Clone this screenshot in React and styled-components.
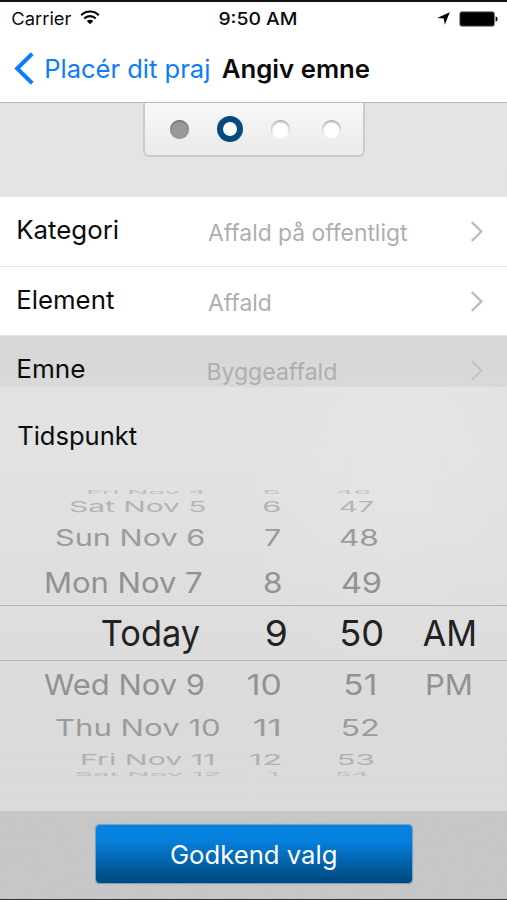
import { useLayoutEffect, useState } from 'react';
import styled, { createGlobalStyle } from 'styled-components';

const steps = ['done', 'current', 'next', 'next'];

const fields = [
  { label: 'Kategori', labelWidth: 100, value: 'Affald på offentligt', valueWidth: 199.5, height: 69 },
  { label: 'Element', labelWidth: 96.3, value: 'Affald', valueWidth: 62.5, height: 68 },
  { label: 'Emne', labelWidth: 66.7, value: 'Byggeaffald', valueWidth: 128, height: 51, selected: true },
];

// cells are [text, offset from the left, width]
const wheelRows = [
  { height: 5, squash: 0.16, color: '#bdbdbd', padding: '0 0 2px', cells: [['Fri Nov 4', 88, 117], ['5', 263, 17], ['46', 336, 34]] },
  { height: 22, squash: 0.5, color: '#b4b4b4', cells: [['Sat Nov 5', 69.5, 135.5], ['6', 263, 17], ['47', 339.5, 33.5]] },
  { height: 41, squash: 0.77, color: '#9b9b9b', cells: [['Sun Nov 6', 56, 148], ['7', 264.5, 15.5], ['48', 340, 37.5]] },
  { height: 47, squash: 0.97, color: '#929292', cells: [['Mon Nov 7', 45.5, 156], ['8', 263.5, 17], ['49', 341.5, 38.5]] },
  { height: 56, squash: 1, active: true, color: '#222', padding: '2px 0 0', cells: [['Today', 102, 98], ['9', 265.5, 20], ['50', 341, 41.5], ['AM', 422.5, 52]] },
  { height: 46, squash: 0.98, color: '#929292', cells: [['Wed Nov 9', 43.5, 159.5], ['10', 248, 32.5], ['51', 345, 30], ['PM', 427, 44]] },
  { height: 42, squash: 0.77, color: '#9b9b9b', cells: [['Thu Nov 10', 55.5, 163.5], ['11', 253.5, 25.5], ['52', 341.5, 36]] },
  { height: 20, squash: 0.5, color: '#b0b0b0', cells: [['Fri Nov 11', 82, 131.5], ['12', 249.5, 30.5], ['53', 337.5, 35.5]] },
  { height: 8, squash: 0.16, color: '#bababa', padding: '2px 0 0', cells: [['Sat Nov 12', 75, 145], ['1', 269, 8], ['54', 336, 32]] },
];

// room for the soft edge that antialiasing adds on each side
const EDGE = 0.4;

// scales a line of text so that its ink fills the given width
function FitText({ children, width, size, weight = 400, squash = 1 }) {
  const [transform, setTransform] = useState('none');

  useLayoutEffect(() => {
    const ctx = document.createElement('canvas').getContext('2d');
    // measured at 10x, the bounding box comes back in whole pixels
    ctx.font = `${weight} ${size * 10}px Inter`;
    const m = ctx.measureText(children);
    const left = m.actualBoundingBoxLeft / 10;
    const right = m.actualBoundingBoxRight / 10;
    const scale = (width - 2 * EDGE) / (left + right);
    setTransform(`translateX(${left * scale + EDGE}px) scale(${scale}, ${squash})`);
  }, [children, width, size, weight, squash]);

  return (
    <TextBox $width={width} $size={size} $weight={weight}>
      <Glyphs style={{ transform }}>{children}</Glyphs>
    </TextBox>
  );
}

function App() {
  return (
    <Screen>
      <GlobalStyle />
      <StatusBar>
        <Carrier>
          <FitText width={59.5} size={17.8}>Carrier</FitText>
          <WifiIcon />
        </Carrier>
        <FitText width={77.5} size={17.8} weight={500}>9:50 AM</FitText>
        <StatusIcons>
          <LocationIcon />
          <BatteryIcon />
        </StatusIcons>
      </StatusBar>
      <NavBar>
        <BackButton>
          <BackIcon />
          <FitText width={163.3} size={25.3}>Placér dit praj</FitText>
        </BackButton>
        <FitText width={147.5} size={25.3} weight={600}>Angiv emne</FitText>
      </NavBar>
      <StepArea>
        <StepPanel>
          {steps.map((step, i) => (
            <StepSlot key={i}><Step $state={step} /></StepSlot>
          ))}
        </StepPanel>
      </StepArea>
      <FieldList>
        {fields.map((field) => (
          <Field key={field.label} $height={field.height} $selected={field.selected}>
            <FitText width={field.labelWidth} size={25.6}>{field.label}</FitText>
            <FieldValue><FitText width={field.valueWidth} size={22.9}>{field.value}</FitText></FieldValue>
            <Chevron />
          </Field>
        ))}
      </FieldList>
      <PickerTitle><FitText width={119} size={25.6}>Tidspunkt</FitText></PickerTitle>
      <Wheel>
        {wheelRows.map((row) => (
          <WheelRow key={row.cells[0][0]} $height={row.height} $color={row.color} $active={row.active} $padding={row.padding}>
            {row.cells.map(([text, left, width], i) => {
              const prev = row.cells[i - 1];
              return (
                <WheelCell key={text} $gap={prev ? left - prev[1] - prev[2] : left}>
                  <FitText width={width} size={row.active ? 35.6 : 29.6} squash={row.squash}>{text}</FitText>
                </WheelCell>
              );
            })}
          </WheelRow>
        ))}
      </Wheel>
      <Footer>
        <ApproveButton><FitText width={165} size={25.6}>Godkend valg</FitText></ApproveButton>
      </Footer>
    </Screen>
  );
}

const WifiIcon = () => (
  <svg width="20" height="15" viewBox="0 0 20 15" fill="none" stroke="#000">
    <path d="M1.2 5.2A12.4 12.4 0 0 1 18.8 5.2" strokeWidth="2.1" />
    <path d="M4.2 8.5A8.2 8.2 0 0 1 15.8 8.5" strokeWidth="2.1" />
    <path d="M10 14.2L6.8 11A4.5 4.5 0 0 1 13.2 11Z" fill="#000" stroke="none" />
  </svg>
);

const LocationIcon = () => (
  <svg width="13" height="13" viewBox="0 0 13 13">
    <path d="M12.8 0.2L7.8 12.8L6.8 6.6L0.2 5.9Z" fill="#000" />
  </svg>
);

const BatteryIcon = () => (
  <svg width="39" height="16" viewBox="0 0 39 16">
    <rect x="0.8" y="0.8" width="34.6" height="14.4" rx="1.8" fill="#000" stroke="#777" strokeWidth="0.8" />
    <path d="M36.6 5.2Q38.6 5.8 38.6 8Q38.6 10.2 36.6 10.8Z" fill="#000" />
  </svg>
);

const BackIcon = () => (
  <svg width="20" height="33" viewBox="0 0 20 33">
    <path d="M18.2 1.8L3.2 16.5L18.2 31.2" fill="none" stroke="#0a7cff" strokeWidth="4" />
  </svg>
);

const Chevron = () => (
  <svg width="14" height="21" viewBox="0 0 14 21">
    <path d="M1.8 1.2L11.3 10.5L1.8 19.8" fill="none" stroke="#bdbdbd" strokeWidth="2.4" />
  </svg>
);

const GlobalStyle = createGlobalStyle`
  body {
    margin: 0;
  }
  * {
    box-sizing: border-box;
  }
`

const Screen = styled.div`
  width: 507px;
  height: 900px;
  display: flex;
  flex-direction: column;
  overflow: hidden;
  color: #0b0b0b;
  font-family: Inter, "Liberation Sans", sans-serif;
  background:
    radial-gradient(ellipse at 78% 54%, rgba(255, 255, 255, 0.12), transparent 30%),
    linear-gradient(#e5e5e5, #e2e2e2 50%, #dbdbdb 80%, #dadada);
  border-top: 2px solid #141214;
  border-bottom: 1px solid #333;
`

const TextBox = styled.span`
  display: block;
  flex: none;
  width: ${({ $width }) => $width}px;
  height: 32px;
  line-height: 32px;
  font-size: ${({ $size }) => $size}px;
  font-weight: ${({ $weight }) => $weight};
`

const Glyphs = styled.span`
  display: inline-block;
  vertical-align: top;
  white-space: pre;
  transform-origin: 0 50%;
`

const StatusBar = styled.div`
  height: 33px;
  flex: none;
  display: grid;
  grid-template-columns: 207px 1fr auto;
  align-items: center;
  padding: 0 9.5px 0 11.5px;
  background: #fff;
`

const Carrier = styled.div`
  display: flex;
  align-items: center;
  gap: 9px;
  svg {
    margin-top: -3px;
  }
`

const StatusIcons = styled.div`
  display: flex;
  align-items: center;
  gap: 9px;
`

const NavBar = styled.div`
  height: 68px;
  flex: none;
  display: flex;
  align-items: center;
  gap: 13px;
  padding-left: 14px;
  background: #fff;
  border-bottom: 1px solid #b9b9b9;
`

const BackButton = styled.div`
  display: flex;
  align-items: center;
  gap: 11.5px;
  color: #0a7cff;
`

const StepArea = styled.div`
  height: 94px;
  flex: none;
  display: flex;
  justify-content: center;
  align-items: flex-start;
`

const StepPanel = styled.div`
  width: 222px;
  height: 54px;
  display: flex;
  justify-content: center;
  align-items: center;
  padding-left: 4px;
  border: 2px solid #cbcbcb;
  border-top: 0;
  border-radius: 0 0 6px 6px;
  background: linear-gradient(#f8f8f8, #eaeaea);
`

const StepSlot = styled.div`
  width: 50.7px;
  display: flex;
  justify-content: center;
`

const Step = styled.div`
  width: ${({ $state }) => ($state === 'current' ? 26 : 19)}px;
  height: ${({ $state }) => ($state === 'current' ? 26 : 19)}px;
  border-radius: 50%;
  background: ${({ $state }) => ($state === 'done' ? '#999' : '#fff')};
  border: ${({ $state }) => ($state === 'current' ? '6.5px solid #064a80' : '0')};
  box-shadow: ${({ $state }) =>
    $state === 'current' ? 'none' : $state === 'done' ? 'inset 0 1px 2px #666' : 'inset 0 1.5px 2.5px #999'};
`

const FieldList = styled.div`
  flex: none;
  height: 190px;
  overflow: hidden;
`

const Field = styled.div`
  height: ${({ $height }) => $height}px;
  display: grid;
  grid-template-columns: 189.5px 262px 1fr;
  align-items: start;
  overflow: hidden;
  padding: 17px 0 0 18px;
  background: ${({ $selected }) => ($selected ? 'linear-gradient(#d7d7d7, #d9d9d9)' : '#fff')};
  & + & {
    margin-top: 1px;
  }
  svg {
    margin-top: 7px;
    opacity: ${({ $selected }) => ($selected ? 0.7 : 1)};
  }
`

const FieldValue = styled.div`
  padding-top: 2.5px;
  color: #aeaeae;
`

const PickerTitle = styled.div`
  flex: none;
  height: 103px;
  padding: 32.5px 0 0 18px;
`

const Wheel = styled.div`
  flex: none;
  height: 321px;
`

const WheelRow = styled.div`
  height: ${({ $height }) => $height}px;
  display: flex;
  align-items: center;
  padding: ${({ $padding }) => $padding || 0};
  color: ${({ $color }) => $color};
  border: solid #b5b5b5;
  border-width: ${({ $active }) => ($active ? '1px 0' : '0')};
`

const WheelCell = styled.div`
  flex: none;
  margin-left: ${({ $gap }) => $gap}px;
`

const Footer = styled.div`
  flex: 1;
  display: flex;
  justify-content: center;
  align-items: flex-start;
  padding-top: 14px;
  background:
    repeating-linear-gradient(35deg, rgba(255, 255, 255, 0.05) 0 1px, transparent 1px 4px),
    #c6c6c6;
`

const ApproveButton = styled.div`
  width: 316px;
  height: 58px;
  display: flex;
  justify-content: center;
  align-items: center;
  padding-top: 2px;
  color: #fff;
  border-radius: 4px;
  background: linear-gradient(#0583df, #0580dc 28%, #00477c);
  box-shadow: 0 0 1px 0.5px #6ba0bf;
`

export default App
